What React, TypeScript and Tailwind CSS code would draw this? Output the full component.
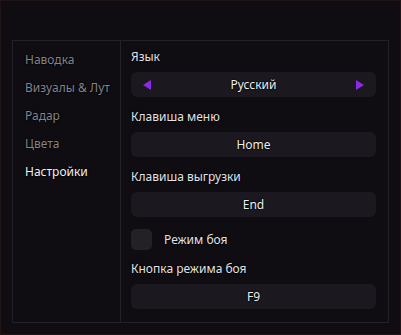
import React, { useState } from 'react';

const tabs = ['Наводка', 'Визуалы & Лут', 'Радар', 'Цвета', 'Настройки'];

const shadow = '[text-shadow:0_0_2px_#000,0_0_1px_#000]';

const Field = ({ label, children }: { label: string; children: React.ReactNode }) => (
    <div className="flex flex-col gap-2">
        <div className={`h-[14px] leading-[14px] text-[12px] text-[#e4e2e8] ${shadow}`}>{label}</div>
        {children}
    </div>
);

const KeyBox = ({ value }: { value: string }) => (
    <div className={`h-[25px] rounded-md bg-[#1b191f] flex items-center justify-center text-[12px] text-[#eeeeee] ${shadow}`}>
        {value}
    </div>
);

export default function App() {
    const [active] = useState(4);
    const [combat, setCombat] = useState(false);

    return (
        <div className="w-[401px] h-[335px] bg-[#0f0d12] border border-[#1f1517] pt-[39px] pl-[11px] font-['Noto_Sans',sans-serif]">
            <div className="w-[377px] h-[283px] border border-[#232127] flex">
                <div className="w-[108px] shrink-0 border-r border-[#232127] pl-3 pt-[12px] flex flex-col">
                    {tabs.map((t, i) => (
                        <div
                            key={t}
                            className={`h-[28px] leading-[14px] text-[12px] ${shadow} ${i === active ? 'text-[#f2f2f2]' : 'text-[#85838a]'}`}
                        >
                            {t}
                        </div>
                    ))}
                </div>
                <div className="flex-1 pl-[10px] pr-3 pt-[9px] flex flex-col gap-[13px]">
                    <Field label="Язык">
                        <div className="h-[25px] rounded-md bg-[#1b191f] flex items-center justify-between px-3">
                            <svg width="8" height="10" viewBox="0 0 8 10"><path d="M8 0 L0 5 L8 10 Z" fill="#8a2be2" /></svg>
                            <span className={`text-[12px] text-[#eeeeee] ${shadow}`}>Русский</span>
                            <svg width="8" height="10" viewBox="0 0 8 10"><path d="M0 0 L8 5 L0 10 Z" fill="#8a2be2" /></svg>
                        </div>
                    </Field>
                    <Field label="Клавиша меню">
                        <KeyBox value="Home" />
                    </Field>
                    <Field label="Клавиша выгрузки">
                        <KeyBox value="End" />
                    </Field>
                    <div className="flex items-center gap-3 h-[21px] -my-px">
                        <button
                            onClick={() => setCombat(!combat)}
                            className={`w-[21px] h-[21px] rounded-[5px] ${combat ? 'bg-[#8a2be2]' : 'bg-[#232127]'}`}
                        />
                        <span className={`text-[12px] text-[#e4e2e8] ${shadow}`}>Режим боя</span>
                    </div>
                    <Field label="Кнопка режима боя">
                        <KeyBox value="F9" />
                    </Field>
                </div>
            </div>
        </div>
    );
}
